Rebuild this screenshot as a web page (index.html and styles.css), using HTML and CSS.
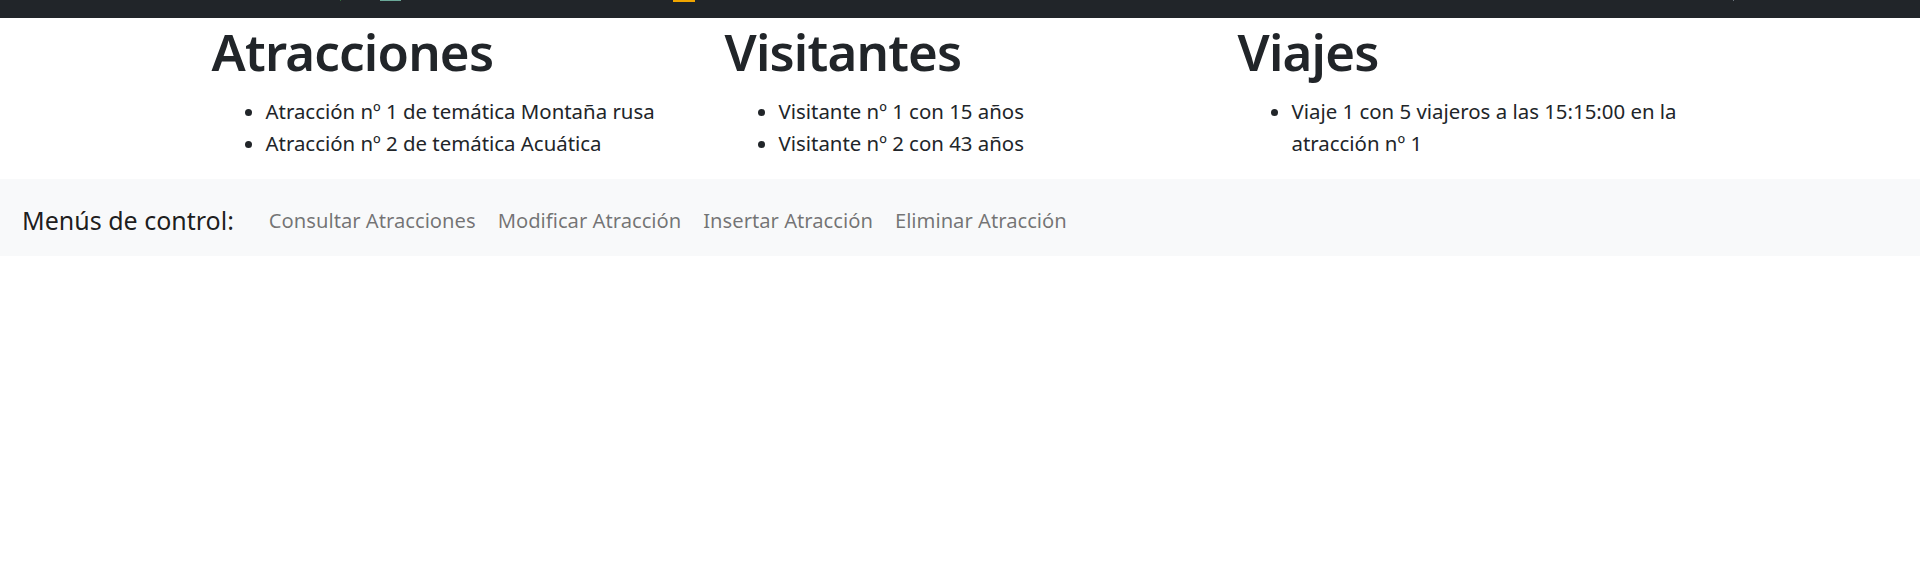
FILE: index.html
```html
<!DOCTYPE html>
<html lang="es">
<head>
<meta charset="utf-8">
<title>Parque</title>
<link rel="stylesheet" href="styles.css">
</head>
<body>
<header class="topbar">
  <span class="mark mark-green"></span>
  <span class="mark mark-teal"></span>
  <span class="mark mark-orange"></span>
  <span class="mark mark-grey"></span>
</header>
<main class="summary">
  <section class="col">
    <h1 class="col-title">Atracciones</h1>
    <ul class="col-list">
      <li>Atracción nº 1 de temática Montaña rusa</li>
      <li>Atracción nº 2 de temática Acuática</li>
    </ul>
  </section>
  <section class="col">
    <h1 class="col-title">Visitantes</h1>
    <ul class="col-list">
      <li>Visitante nº 1 con 15 años</li>
      <li>Visitante nº 2 con 43 años</li>
    </ul>
  </section>
  <section class="col">
    <h1 class="col-title">Viajes</h1>
    <ul class="col-list">
      <li>Viaje 1 con 5 viajeros a las 15:15:00 en la atracción nº 1</li>
    </ul>
  </section>
</main>
<nav class="controlbar">
  <span class="brand">Menús de control:</span>
  <a class="nav-link" href="#">Consultar Atracciones</a>
  <a class="nav-link" href="#">Modificar Atracción</a>
  <a class="nav-link" href="#">Insertar Atracción</a>
  <a class="nav-link" href="#">Eliminar Atracción</a>
</nav>
</body>
</html>
```

FILE: styles.css
```css
* { box-sizing: border-box; }
html, body { margin: 0; padding: 0; }
body {
  font-family: "Noto Sans", "Open Sans", sans-serif;
  color: #212529;
  background: #fff;
  font-size: 20px;
}
.topbar {
  height: 18px;
  background: #212529;
  display: flex;
  align-items: flex-start;
}
.mark { display: block; height: 1px; }
.mark-green { width: 1px; margin-left: 340px; background: #2f6b3a; }
.mark-teal { width: 21px; margin-left: 39px; background: #6aa898; }
.mark-orange { width: 22px; margin-left: 272px; height: 2px; background: #f0a500; }
.mark-grey { width: 1px; margin-left: 1038px; background: #6c757d; }

.summary {
  width: 1539px;
  margin: 0 auto;
  display: grid;
  grid-template-columns: repeat(3, 1fr);
}
.col { padding: 0 21px; }
.col-title {
  margin: 0;
  font-size: 51px;
  font-weight: 600;
  letter-spacing: -0.8px;
  line-height: 1.2;
  padding-top: 3px;
  margin-bottom: 13px;
}
.col-list {
  margin: 0 0 20px;
  padding-left: 54px;
  font-size: 20.4px;
  line-height: 32px;
}
.controlbar {
  background: #f8f9fa;
  height: 77px;
  display: flex;
  align-items: center;
  padding: 4px 22px 0;
}
.brand {
  font-size: 25px;
  margin-right: 35px;
  color: rgba(0,0,0,.9);
}
.nav-link {
  font-size: 20.2px;
  color: rgba(0,0,0,.55);
  text-decoration: none;
  margin-right: 22px;
}
```
